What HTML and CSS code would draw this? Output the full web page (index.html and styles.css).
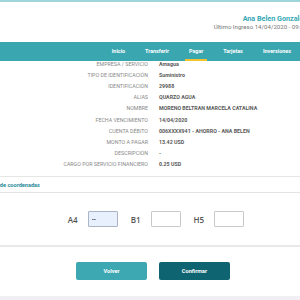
FILE: index.html
```html
<!DOCTYPE html>
<html lang="es">
  <head>
    <meta charset="UTF-8" />
    <meta name="viewport" content="width=device-width, initial-scale=1.0" />
    <title>Pagar servicio</title>
    <link rel="stylesheet" href="styles.css">
  </head>

  <body>
    <div class="topline"></div>
    <header class="header">
      <div class="user">
        <div class="user-name">Ana Belen Gonzalez</div>
        <div class="user-login">Último Ingreso 14/04/2020 - 09:45</div>
      </div>
    </header>

    <nav class="menu">
      <a href="#">Inicio</a>
      <a href="#">Transferir</a>
      <a href="#" class="active">Pagar</a>
      <a href="#">Tarjetas</a>
      <a href="#">Inversiones</a>
    </nav>

    <div class="summary">
      <div class="row"><span class="label">Empresa / Servicio</span><span class="value">Amagua</span></div>
      <div class="row"><span class="label">Tipo de identificación</span><span class="value">Suministro</span></div>
      <div class="row"><span class="label">Identificación</span><span class="value">29988</span></div>
      <div class="row"><span class="label">Alias</span><span class="value">QUARZO AGUA</span></div>
      <div class="row"><span class="label">Nombre</span><span class="value">MORENO BELTRAN MARCELA CATALINA</span></div>
      <div class="row"><span class="label">Fecha vencimiento</span><span class="value">14/04/2020</span></div>
      <div class="row"><span class="label">Cuenta débito</span><span class="value">006XXXX941 - AHORRO - ANA BELEN</span></div>
      <div class="row"><span class="label">Monto a pagar</span><span class="value">13.42 USD</span></div>
      <div class="row"><span class="label">Descripción</span><span class="value">-</span></div>
      <div class="row"><span class="label">Cargo por servicio financiero</span><span class="value">0.25 USD</span></div>
    </div>

    <section class="card">
      <div class="card-title">Tarjeta de coordenadas</div>
      <div class="card-body">
        <label class="coord">A4 <input type="text" class="filled" value="--"></label>
        <label class="coord">B1 <input type="text"></label>
        <label class="coord">H5 <input type="text"></label>
      </div>
    </section>

    <div class="actions">
      <button type="button" class="btn back">Volver</button>
      <button type="button" class="btn confirm">Confirmar</button>
    </div>

    <div class="footer"></div>
  </body>
</html>
```

FILE: styles.css
```css
html,
body {
  margin: 0;
  height: 300px;
  overflow: hidden;
  background: white;
  font-family: Roboto, "Liberation Sans", sans-serif;
}

.topline {
  height: 2px;
  background-color: #9ed5da;
}

.header {
  height: 40px;
  display: flex;
  justify-content: flex-end;
  align-items: center;
}

.user {
  margin-right: -7px;
  text-align: right;
  white-space: nowrap;
}

.user-name {
  color: #36a9b5;
  font-weight: bold;
  font-size: 7.2px;
  line-height: 9px;
}

.user-login {
  color: #777;
  font-size: 6.1px;
  line-height: 8px;
}

.menu {
  position: relative; /* sits over the scrolled summary */
  z-index: 1;
  height: 19px;
  display: flex;
  justify-content: flex-end;
  gap: 12px;
  padding-right: 5px;
  background-color: #3aa6b0;
}

.menu a {
  display: flex;
  align-items: center;
  padding: 0 4px;
  color: white;
  font-size: 5.4px;
  font-weight: bold;
  text-decoration: none;
  border-bottom: 2px solid transparent;
}

.menu a.active {
  border-bottom-color: #f2c230;
}

.summary {
  margin-top: -2.5px;
}

.row {
  display: grid;
  grid-template-columns: 148px 1fr;
  column-gap: 11px;
  height: 11.1px;
  align-items: center;
  font-size: 5.3px;
  white-space: nowrap;
}

.label {
  text-align: right;
  text-transform: uppercase;
  color: #888;
}

.value {
  color: #5a5a5a;
  font-weight: bold;
}

.card {
  margin-top: 7px;
  border-top: 1px solid #e6e6e6;
  border-bottom: 2px solid #e9e9ec;
}

.card-title {
  height: 15px;
  line-height: 16px;
  margin-left: -19px;
  border-bottom: 1px solid #e3e3e3;
  color: #2a8b99;
  font-size: 5.6px;
  font-weight: bold;
}

.card-body {
  height: 52px;
  display: flex;
  justify-content: center;
  align-items: center;
  gap: 13px;
  padding-left: 12px;
}

.coord {
  display: flex;
  align-items: center;
  gap: 10px;
  font-family: "Open Sans", sans-serif;
  font-size: 8px;
  font-weight: 600;
  color: #555;
}

.coord input {
  box-sizing: border-box;
  width: 30px;
  height: 16px;
  padding: 0 3px;
  border: 1px solid #c9c9c9;
  border-radius: 1px;
  font-size: 6px;
  font-weight: bold;
  color: #222;
  background: white;
}

.coord input.filled {
  background-color: #e8f0fe;
  border-color: #a9b4c4;
}

.actions {
  display: flex;
  justify-content: center;
  gap: 12px;
  padding: 15px 0 0 6px;
}

.btn {
  width: 71px;
  height: 18px;
  border: none;
  border-radius: 2px;
  color: white;
  font-family: Roboto, sans-serif;
  font-size: 5.6px;
  font-weight: bold;
}

.back {
  background-color: #3da8b2;
}

.confirm {
  background-color: #0e6571;
}

.footer {
  margin-top: 16px;
  height: 6px;
  background-color: #efeff4;
}
```
